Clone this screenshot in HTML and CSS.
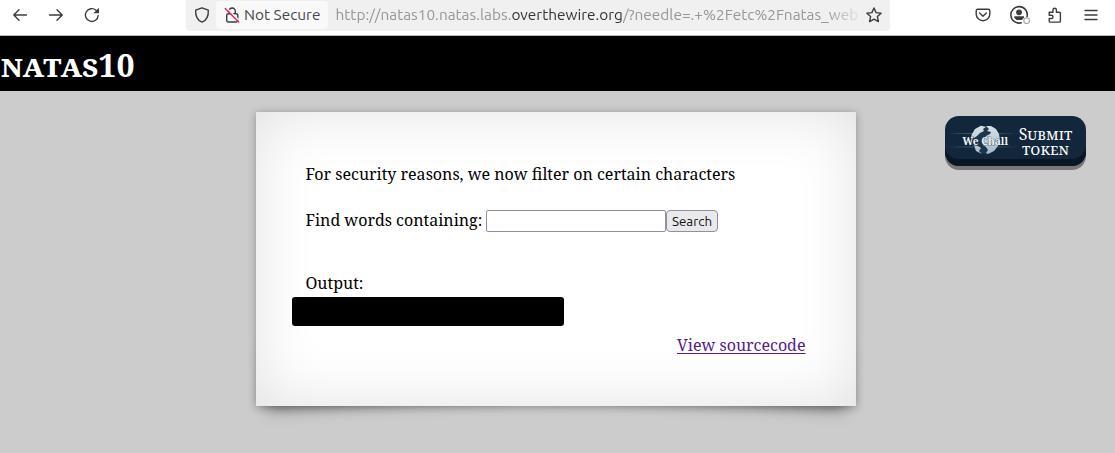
FILE: index.html
```html
<!DOCTYPE html>
<html lang="en">
<head>
<meta charset="utf-8">
<title>natas10</title>
<link rel="stylesheet" href="styles.css">
</head>
<body>
<div class="toolbar">
  <nav class="nav">
    <svg class="icon" viewBox="0 0 16 16"><path d="M14.5 8H2M7 2.8 1.8 8 7 13.2"/></svg>
    <svg class="icon" viewBox="0 0 16 16"><path d="M1.5 8H14M9 2.8 14.2 8 9 13.2"/></svg>
    <svg class="icon" viewBox="0 0 16 16"><path d="M14.2 8.5A6.4 6.4 0 1 1 12 3.2L13.6 4.8"/><path class="solid" d="M15 .8V6.3H9.5Z"/></svg>
  </nav>
  <div class="urlbar">
    <svg class="icon shield" viewBox="0 0 16 16"><path d="M8 .8 14.3 3.2C14.6 8.5 12.6 13.3 8 15.2 3.4 13.3 1.4 8.5 1.7 3.2Z"/></svg>
    <div class="identity">
      <svg class="icon lock" viewBox="0 0 16 16"><path d="M5.300 6.500V4a3 3 0 0 1 6 0V6.500M4.500 6.800h7.500a1.800 1.800 0 0 1 1.800 1.800v4.600A1.800 1.800 0 0 1 12 15H4.500a1.800 1.800 0 0 1-1.800-1.800V8.600A1.800 1.800 0 0 1 4.500 6.800Z"/><path class="gap" d="M3 1.200 16 14.200"/><path class="strike" d="M1.200 1.500 14.700 15"/></svg>
      <span class="secure">Not Secure</span>
    </div>
    <div class="url"><span class="sub">http://natas10.natas.labs.</span><span class="domain">overthewire.org</span><span class="path">/?needle=.+%2Fetc%2Fnatas_web</span></div>
    <svg class="icon star" viewBox="0 0 16 16"><path d="m8 1 2.100 4.600 5 .6-3.700 3.400 1 5L8 12.100 3.600 14.600l1-5L.9 6.200l5-.6Z"/></svg>
  </div>
  <div class="actions">
    <svg class="icon" viewBox="0 0 16 16"><path d="M2.700 2.200H13.300A1.500 1.500 0 0 1 14.800 3.700V7.200A6.800 6.500 0 0 1 1.200 7.200V3.700A1.500 1.500 0 0 1 2.700 2.200ZM4.600 6 8 9.200 11.400 6"/></svg>
    <svg class="icon account" viewBox="0 0 18 16"><path d="M10 14.900A7.300 7.300 0 1 1 15.200 9.400"/><circle class="solid" cx="8" cy="5.600" r="2.600"/><path class="solid" d="M3.800 9.200h8.600v1.200L10.500 12.500H5.800L3.800 10.400Z"/><circle class="dot" cx="14.800" cy="13" r="2.500"/></svg>
    <svg class="icon" viewBox="0 0 16 16"><path d="M2.200 5.200H6V2.900a1.700 1.700 0 0 1 3.400 0V5.200H12.200A1.200 1.200 0 0 1 13.400 6.400V13.900A1.200 1.200 0 0 1 12.200 15.100H3.400A1.200 1.200 0 0 1 2.200 13.900V11.500H4.400a1.500 1.500 0 0 0 0-3.200H2.200Z"/></svg>
    <svg class="icon" viewBox="0 0 16 16"><path d="M2 3.500H14M2 8H14M2 12.500H14"/></svg>
  </div>
</div>
<h1 class="banner">natas10</h1>
<main class="page">
  <section class="content">
    <p class="line notice">For security reasons, we now filter on certain characters</p>
    <form class="search">
      <label class="line label" for="needle">Find words containing:</label>
      <input class="field" id="needle" name="needle">
      <button class="submit" type="button">Search</button>
    </form>
    <p class="line output">Output:</p>
    <div class="redacted"></div>
    <div class="source"><a class="line link" href="#">View sourcecode</a></div>
  </section>
  <a class="token">
    <svg class="logo" viewBox="0 0 74 42">
      <defs>
        <linearGradient id="beam"><stop offset="0" stop-color="#5f86a3" stop-opacity="0"/><stop offset=".5" stop-color="#7898ae" stop-opacity=".7"/><stop offset="1" stop-color="#5f86a3" stop-opacity="0"/></linearGradient>
        <linearGradient id="globe" x2="0" y2="1"><stop offset="0" stop-color="#d6e1ea"/><stop offset="1" stop-color="#a6b9c8"/></linearGradient>
      </defs>
      <path d="M0 17H74V18H0ZM0 30.500H74V31.500H0Z" fill="url(#beam)"/>
      <circle cx="40" cy="24" r="14" fill="#1d364b"/>
      <path fill="url(#globe)" d="M27 18 30 13 36 9.700 41 11 38 13 39 15 35 17 32 20 29 22 26 21ZM41 10 46 10 51 13 54 18 55 24 53 30 49 35 43 38 41 37 43 34 41 31 38 29 38 24 41 20 45 18 46 16 42 15 44 13ZM29 29 33 30 36 32 34 35 37 38 31 35Z"/>
      <text class="brand" x="17.500" y="28.500" textLength="45.500" lengthAdjust="spacingAndGlyphs">We Chall</text>
    </svg>
    <span class="caption">Submit<br>token</span>
  </a>
</main>
</body>
</html>
```
FILE: styles.css
```css
* { box-sizing: border-box; }
body { margin: 0; width: 1115px; height: 453px; overflow: hidden; background: #ccc; color: #000; font-family: "Noto Serif", "Droid Serif", "Liberation Serif", serif; }
.toolbar { display: flex; height: 36px; background: #fff; border-bottom: 1px solid #bbb; font-family: Ubuntu, "Noto Sans", sans-serif; font-size: 15.4px; }
.icon { display: block; flex: none; width: 16px; height: 16px; fill: none; stroke: #3c3c40; stroke-width: 1.4; stroke-linejoin: round; stroke-linecap: round; }
.icon .solid { fill: #3c3c40; stroke: none; }
.icon .gap { stroke: #f9f9f9; }
.icon .strike { stroke: #e22850; }
.icon .dot { stroke: #aaa; stroke-width: 1; }
.nav { display: flex; gap: 20px; width: 186px; padding: 7px 0 0 12px; }
.urlbar { display: flex; width: 704px; height: 31px; background: #f0f0f0; border-radius: 0 0 4px 4px; }
.shield { margin: 7px 6px 0 8px; }
.identity { display: flex; width: 112px; height: 28px; margin-top: 1px; padding: 6px 0 0 8px; background: #f9f9f9; border-radius: 4px; color: #47474b; line-height: 16px; }
.lock { overflow: visible; }
.secure { margin-left: 4px; white-space: nowrap; }
.url { width: 523px; margin-left: 7.5px; margin-right: -.5px; overflow: hidden; white-space: nowrap; line-height: 30px; color: #969696; mask-image: linear-gradient(90deg, #000 490px, transparent 527px); }
.domain { color: #333; }
.star { margin: 7px 0 0 8px; }
.actions { display: flex; gap: 20px; padding: 7px 0 0 85px; }
.account { width: 20.25px; height: 18px; margin: -1px -3.25px 0 -1px; overflow: visible; }
.banner { height: 55px; margin: 0; padding-left: 1px; background: #000; color: #fff; font-size: 32px; line-height: 57px; font-variant: small-caps; }
.page { position: relative; z-index: 0; display: flex; align-items: flex-start; padding: 21px 0 0 256px; }
.content { position: relative; width: 600px; height: 294px; padding: 50px 50.5px 50px 49.5px; background: #fff; box-shadow: 0 1px 8px rgba(0,0,0,.3), 0 0 60px rgba(0,0,0,.12) inset; }
.content::before, .content::after { content: ""; position: absolute; z-index: -1; bottom: 15px; width: 50%; height: 20%; max-width: 300px; box-shadow: 0 10px 16px rgba(0,0,0,.5); }
.content::before { left: 12px; transform: skew(-5deg) rotate(-3deg); }
.content::after { right: 12px; transform: skew(5deg) rotate(3deg); }
.line { margin: 0; font-size: 16px; line-height: 24px; white-space: nowrap; }
.search { display: flex; height: 22px; margin-top: 24px; }
.label { width: 180.5px; line-height: 20px; }
.field { width: 180px; height: 22px; border: 1px solid #8f8f9d; border-radius: 2px; background: #fff; }
.submit { width: 52px; height: 22px; padding: 0; border: 1px solid #8f8f9d; border-radius: 4px; background: #e9e9ed; color: #111; font: 13.333px Ubuntu, "Noto Sans", sans-serif; }
.output { margin-top: 39px; }
.redacted { width: 272px; height: 29px; margin: 2px 0 0 -13.5px; background: #000; border-radius: 3px; }
.source { display: flex; justify-content: flex-end; margin-top: 7px; }
.link { color: #551a8b; text-underline-offset: 2px; }
.token { display: flex; width: 141px; height: 50px; margin: 4px 0 0 88.5px; border-radius: 14px; background: #12273b; box-shadow: inset 0 -7px 0 #091725, 0 4px 0 #7b7779; color: #fff; }
.logo { width: 74px; height: 42px; }
.brand { font: bold 11.5px "Noto Serif", "Liberation Serif", serif; fill: #f4f8fc; stroke: #12273b; stroke-width: .7px; paint-order: stroke; }
.caption { width: 54px; padding-top: 11px; font-size: 16px; line-height: 14.5px; text-align: center; font-variant: small-caps; }
```
